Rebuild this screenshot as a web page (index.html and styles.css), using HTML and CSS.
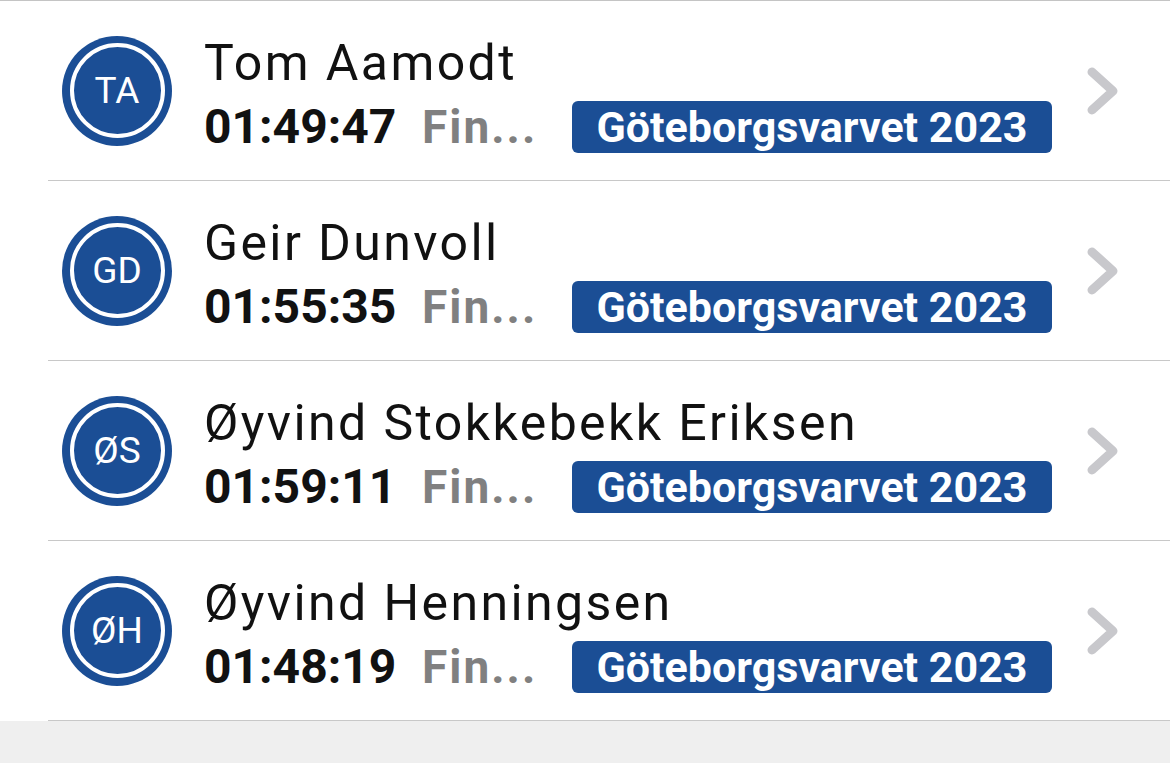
FILE: index.html
```html
<!DOCTYPE html>
<html lang="no">
<head>
<meta charset="utf-8">
<link rel="stylesheet" href="styles.css">
</head>
<body>
<div class="list">
  <div class="row">
    <div class="avatar"><span class="ring"><span class="initials">TA</span></span></div>
    <div class="info">
      <div class="name">Tom Aamodt</div>
      <div class="meta"><span class="time">01:49:47</span><span class="status">Fin...</span><span class="badge">Göteborgsvarvet 2023</span></div>
    </div>
    <svg class="chev" width="34" height="50" viewBox="0 0 34 50"><path d="M6 6 L27 25 L6 44" fill="none" stroke="#c8c8cc" stroke-width="9" stroke-linecap="round" stroke-linejoin="round"/></svg>
  </div>
  <div class="row">
    <div class="avatar"><span class="ring"><span class="initials">GD</span></span></div>
    <div class="info">
      <div class="name">Geir Dunvoll</div>
      <div class="meta"><span class="time">01:55:35</span><span class="status">Fin...</span><span class="badge">Göteborgsvarvet 2023</span></div>
    </div>
    <svg class="chev" width="34" height="50" viewBox="0 0 34 50"><path d="M6 6 L27 25 L6 44" fill="none" stroke="#c8c8cc" stroke-width="9" stroke-linecap="round" stroke-linejoin="round"/></svg>
  </div>
  <div class="row">
    <div class="avatar"><span class="ring"><span class="initials">ØS</span></span></div>
    <div class="info">
      <div class="name">Øyvind Stokkebekk Eriksen</div>
      <div class="meta"><span class="time">01:59:11</span><span class="status">Fin...</span><span class="badge">Göteborgsvarvet 2023</span></div>
    </div>
    <svg class="chev" width="34" height="50" viewBox="0 0 34 50"><path d="M6 6 L27 25 L6 44" fill="none" stroke="#c8c8cc" stroke-width="9" stroke-linecap="round" stroke-linejoin="round"/></svg>
  </div>
  <div class="row">
    <div class="avatar"><span class="ring"><span class="initials">ØH</span></span></div>
    <div class="info">
      <div class="name">Øyvind Henningsen</div>
      <div class="meta"><span class="time">01:48:19</span><span class="status">Fin...</span><span class="badge">Göteborgsvarvet 2023</span></div>
    </div>
    <svg class="chev" width="34" height="50" viewBox="0 0 34 50"><path d="M6 6 L27 25 L6 44" fill="none" stroke="#c8c8cc" stroke-width="9" stroke-linecap="round" stroke-linejoin="round"/></svg>
  </div>
</div>
</body>
</html>
```
FILE: styles.css
```css
html, body {
  margin: 0;
  padding: 0;
  background: #efefef;
  font-family: Roboto, "Liberation Sans", sans-serif;
}
.list {
  background: #ffffff;
  border-top: 1px solid #c4c4c4;
}
.row {
  display: flex;
  align-items: center;
  height: 179px;
  margin-left: 48px;
  border-bottom: 1px solid #c8c8c8;
  box-sizing: content-box;
}
.avatar {
  width: 110px;
  height: 110px;
  margin-left: 14px;
  border-radius: 50%;
  background: #1b4e95;
  display: flex;
  align-items: center;
  justify-content: center;
  flex: none;
}
.ring {
  width: 95px;
  height: 95px;
  border-radius: 50%;
  border: 4px solid #ffffff;
  box-sizing: border-box;
  display: flex;
  align-items: center;
  justify-content: center;
}
.initials {
  color: #ffffff;
  font-size: 37px;
  line-height: 1;
}
.info {
  margin-left: 32px;
  padding-top: 8px;
  flex: 1;
  display: flex;
  flex-direction: column;
}
.name {
  font-size: 50px;
  line-height: 56px;
  color: #111111;
  letter-spacing: 2.4px;
}
.meta {
  display: flex;
  align-items: center;
  height: 56px;
  margin-top: 8px;
}
.time {
  font-size: 48px;
  font-weight: 700;
  color: #111111;
  width: 218px;
}
.status {
  font-size: 46px;
  font-weight: 700;
  color: #808080;
  letter-spacing: 2px;
  width: 150px;
}
.badge {
  background: #1b4e95;
  color: #ffffff;
  font-size: 43px;
  font-weight: 700;
  border-radius: 6px;
  height: 52px;
  width: 480px;
  display: flex;
  align-items: center;
  justify-content: center;
  box-sizing: border-box;
}
.chev {
  margin-right: 50px;
  margin-left: 34px;
  flex: none;
}
```
